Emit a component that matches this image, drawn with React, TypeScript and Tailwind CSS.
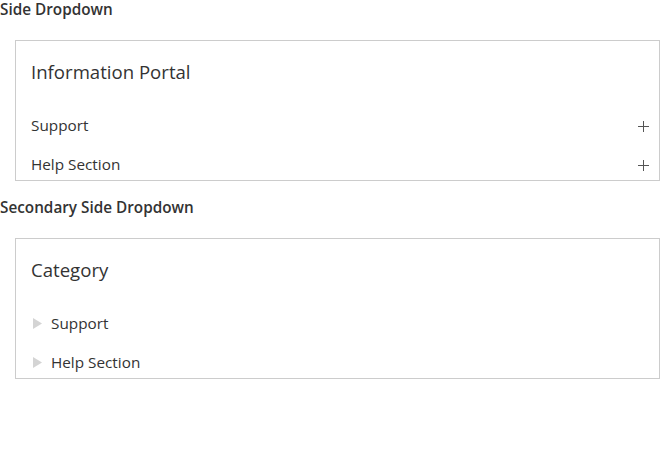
import React from 'react';

const font = { fontFamily: '"Open Sans", "Noto Sans", sans-serif' };

const Plus = () => (
  <svg width="11" height="11" viewBox="0 0 11 11" className="mt-[3px]">
    <path d="M5.5 0v11M0 5.5h11" stroke="#555" strokeWidth="1" />
  </svg>
);

const Caret = () => (
  <svg width="9" height="11" viewBox="0 0 9 11" className="mr-[9px] ml-[2px]">
    <path d="M0 0L9 5.5L0 11Z" fill="#d4d4d4" />
  </svg>
);

const Panel = ({
  title,
  items,
  variant,
}: {
  title: string;
  items: string[];
  variant: 'plus' | 'caret';
}) => (
  <div className="ml-[15px] mt-[22px] w-[645px] h-[141px] border border-[#cccccc] px-[15px] pt-[17px]">
    <div className="h-[28px] leading-[28px] text-[18.6px] text-[#333]">{title}</div>
    <div className="mt-[24px] flex flex-col gap-[9px]">
      {items.map((item) => (
        <div key={item} className="h-[30px] flex items-center text-[15.3px] text-[#333]">
          {variant === 'caret' && <Caret />}
          <span className="flex-1">{item}</span>
          {variant === 'plus' && (
            <span className="mr-[-5px]">
              <Plus />
            </span>
          )}
        </div>
      ))}
    </div>
  </div>
);

export default function App() {
  return (
    <div className="bg-white w-[671px] h-[451px]" style={font}>
      <h2 className="leading-[18px] text-[15.3px] font-semibold text-[#333]">Side Dropdown</h2>
      <Panel title="Information Portal" items={['Support', 'Help Section']} variant="plus" />
      <h2 className="mt-[17px] leading-[18px] text-[15.3px] font-semibold text-[#333]">
        Secondary Side Dropdown
      </h2>
      <Panel title="Category" items={['Support', 'Help Section']} variant="caret" />
    </div>
  );
}
